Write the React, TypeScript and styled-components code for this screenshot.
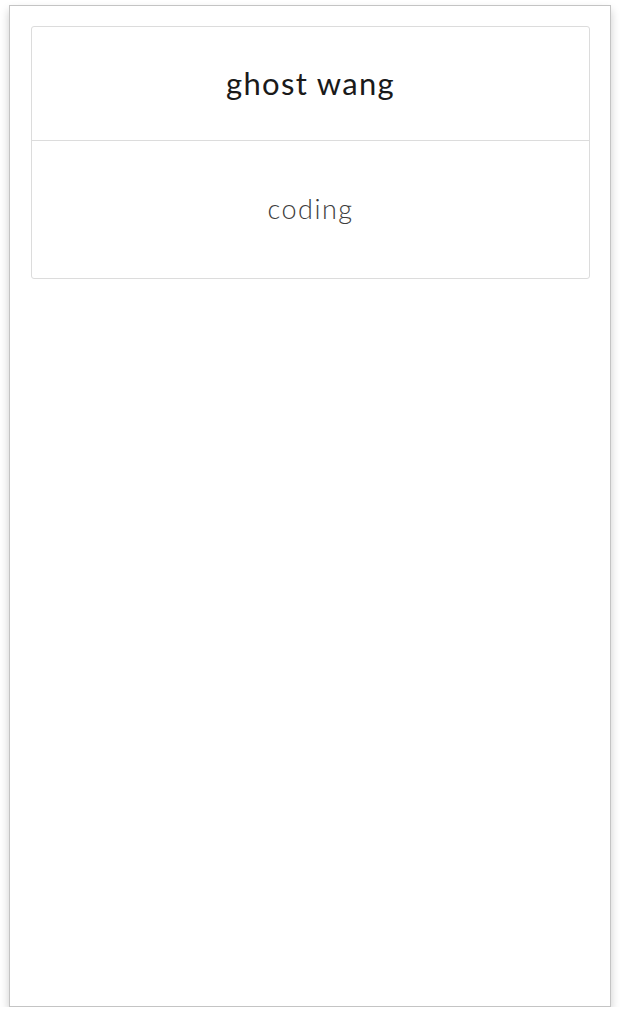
import React from "react";
import styled, { createGlobalStyle } from "styled-components";

const Global = createGlobalStyle`
  html, body { margin: 0; padding: 0; background: #ffffff; }
  body { font-family: "Lato", "Open Sans", "DejaVu Sans", sans-serif; }
`;

const Frame = styled.div`
  box-sizing: border-box;
  margin: 5px 0 0 9px;
  width: 602px;
  height: 1002px;
  border: 1px solid #c4c4c4;
  background: #fff;
  box-shadow: 0 5px 9px rgba(0, 0, 0, 0.2);
  padding: 20px 20px 0 21px;
`;

const Card = styled.div`
  box-sizing: border-box;
  border: 1px solid #dcdcdc;
  border-radius: 3px;
  display: flex;
  flex-direction: column;
`;

const Header = styled.div`
  box-sizing: border-box;
  height: 114px;
  display: flex;
  align-items: center;
  justify-content: center;
  border-bottom: 1px solid #dcdcdc;
  font-size: 31px;
  letter-spacing: 1.3px;
  color: #1a1a1a;
  padding-bottom: 2px;
`;

const Body = styled.div`
  box-sizing: border-box;
  height: 137px;
  display: flex;
  align-items: center;
  justify-content: center;
  font-size: 27px;
  letter-spacing: 1.5px;
  font-weight: 300;
  color: #3c3c3c;
  padding-bottom: 3px;
`;

export default function App() {
  return (
    <>
      <Global />
      <Frame>
        <Card>
          <Header>ghost wang</Header>
          <Body>coding</Body>
        </Card>
      </Frame>
    </>
  );
}
